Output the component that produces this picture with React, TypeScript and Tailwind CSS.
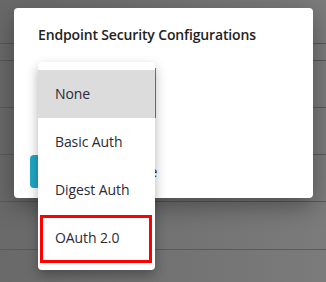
import React from 'react';

const items = ['None', 'Basic Auth', 'Digest Auth', 'OAuth 2.0'];

export default function App() {
  return (
    <div
      className="relative w-[326px] h-[282px] overflow-hidden bg-gradient-to-r from-[#696969] to-[#7b7b7b]"
      style={{ fontFamily: '"Open Sans", "Liberation Sans", sans-serif' }}
    >
      {/* table rows behind the backdrop */}
      <div className="flex flex-col">
        <div className="h-[44px] border-b border-[#575757]" />
        <div className="h-[17px] border-b border-[#575757]" />
        <div className="h-[47px] border-b border-[#5a5a5a]" />
        <div className="h-[47px] border-b border-[#5a5a5a]" />
        <div className="h-[47px] border-b border-[#5a5a5a]" />
        <div className="h-[48px] border-b border-[#5a5a5a]" />
      </div>

      {/* dialog */}
      <div className="absolute left-[14px] top-[8px] w-[299px] h-[190px] rounded-[4px] bg-white shadow-[0_8px_24px_rgba(0,0,0,0.35)]">
        <div className="pl-[24px] pt-[17px] text-[14px] tracking-[-0.15px] font-semibold text-[#222] leading-[20px]">
          Endpoint Security Configurations
        </div>
        <div className="absolute left-[16px] top-[147px] flex items-center gap-[12px]">
          <div className="w-[80px] h-[33px] rounded-[4px] bg-[#1fa7c3]" />
          <span className="text-[14px] text-[#2b2b3a]">Close</span>
        </div>
      </div>

      {/* select outline peeking out */}
      <div className="absolute left-[154px] top-[68px] w-[2px] h-[50px] bg-[#2a9bb0]" />

      {/* dropdown menu */}
      <div className="absolute left-[38px] top-[62px] w-[117px] rounded-[4px] bg-white py-[8px] shadow-[0_5px_12px_rgba(0,0,0,0.3)]">
        {items.map((label, i) => (
          <div
            key={label}
            className={`relative flex items-center h-[48px] pl-[17px] text-[14px] tracking-[-0.1px] text-[#2a2a38] ${
              i === 0 ? 'bg-[#dcdcdc]' : ''
            }`}
          >
            <span className="-translate-y-[1px]">{label}</span>
            {label === 'OAuth 2.0' && (
              <div className="absolute left-[2px] right-[3px] top-[1px] bottom-[-1px] border-[3px] border-[#ff0000]" />
            )}
          </div>
        ))}
      </div>
    </div>
  );
}
